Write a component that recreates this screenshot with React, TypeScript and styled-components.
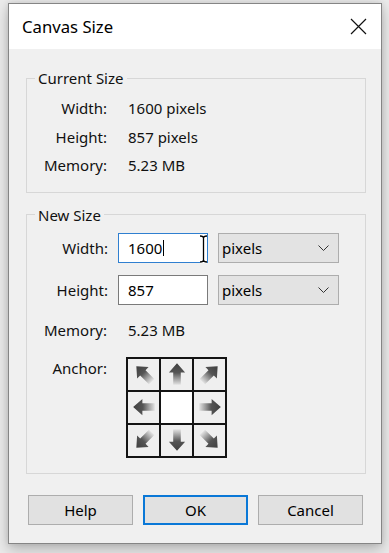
import React from "react";
import styled, { createGlobalStyle } from "styled-components";

const Global = createGlobalStyle`
  html, body { margin: 0; padding: 0; background: #ebebeb; }
  body { font-family: "Noto Sans", "Open Sans", sans-serif; color: #111; }
  * { box-sizing: border-box; }
`;

const Page = styled.div`
  width: 389px;
  height: 553px;
  padding: 3px 8px 0 8px;
  background: #ebebeb;
`;

const Window = styled.div`
  width: 374px;
  height: 541px;
  border: 1px solid #858585;
  background: #f0f0f0;
  box-shadow: 0 6px 14px rgba(0, 0, 0, 0.22), 0 0 6px rgba(0, 0, 0, 0.12);
  display: flex;
  flex-direction: column;
`;

const TitleBar = styled.div`
  height: 45px;
  background: #ffffff;
  display: flex;
  align-items: center;
  justify-content: space-between;
  padding-left: 13px;
`;

const Title = styled.div`
  font-size: 16.7px;
  color: #000;
`;

const CloseButton = styled.button`
  width: 46px;
  height: 45px;
  border: 0;
  padding: 0;
  background: transparent;
  display: flex;
  align-items: center;
  justify-content: center;
`;

const Client = styled.div`
  flex: 1;
  padding: 19px 15px 0 17px;
  display: flex;
  flex-direction: column;
`;

const Group = styled.fieldset<{ $pt: number; $pb: number; $mb?: number }>`
  margin: 0 0 ${(p) => p.$mb ?? 0}px 0;
  padding: ${(p) => p.$pt}px 0 ${(p) => p.$pb}px 0;
  border: 1px solid #d7d7d7;
  min-width: 0;
`;

const Legend = styled.legend`
  margin-left: 8px;
  padding: 0 3px;
  font-size: 15px;
  line-height: 20px;
`;

const InfoGrid = styled.div`
  display: grid;
  grid-template-columns: 80px auto;
  column-gap: 21px;
  grid-auto-rows: 28.5px;
  align-items: center;
  font-size: 15px;
`;

const Label = styled.span<{ $w?: number; $mt?: number }>`
  width: ${(p) => p.$w ?? 80}px;
  margin-top: ${(p) => p.$mt ?? 0}px;
  flex: none;
  text-align: right;
  font-size: 15px;
  line-height: 20px;
`;

const Value = styled.span`
  font-size: 15px;
  line-height: 20px;
`;

const FieldRow = styled.div<{ $gap: number; $mt?: number; $align?: string }>`
  display: flex;
  align-items: ${(p) => p.$align ?? "center"};
  gap: ${(p) => p.$gap}px;
  margin-top: ${(p) => p.$mt ?? 0}px;
`;

const TextBox = styled.div<{ $active?: boolean }>`
  position: relative;
  width: 90px;
  height: 30px;
  background: #fff;
  border: 1px solid ${(p) => (p.$active ? "#2f7fd0" : "#7a7a7a")};
  padding-left: 9px;
  display: flex;
  align-items: center;
  font-size: 15px;
  color: #000;
`;

const Caret = styled.span`
  display: inline-block;
  width: 1px;
  height: 16px;
  background: #000;
  margin-left: 1px;
`;

const IBeam = styled.svg`
  position: absolute;
  left: 80px;
  top: 0px;
`;

const Select = styled.div`
  width: 121px;
  height: 30px;
  background: #e3e3e3;
  border: 1px solid #adadad;
  padding: 0 9px 0 3px;
  display: flex;
  align-items: center;
  justify-content: space-between;
  font-size: 15px;
  color: #000;
`;

const AnchorGrid = styled.div`
  display: grid;
  grid-template-columns: repeat(3, 31px);
  grid-template-rows: repeat(3, 31px);
  gap: 2px;
  padding: 2px;
  background: #141414;
`;

const AnchorCell = styled.div<{ $center?: boolean }>`
  background: ${(p) => (p.$center ? "#ffffff" : "#efefef")};
  display: flex;
  align-items: center;
  justify-content: center;
`;

const ArrowSvg = styled.svg<{ $angle: number }>`
  transform: rotate(${(p) => p.$angle}deg);
`;

const ButtonRow = styled.div`
  display: flex;
  gap: 10px;
  margin: 21px 0 0 2px;
`;

const Button = styled.button<{ $default?: boolean }>`
  width: 105px;
  height: 30px;
  background: #e1e1e1;
  border: ${(p) => (p.$default ? "2px solid #0a78d7" : "1px solid #adadad")};
  font-family: "Noto Sans", "Open Sans", sans-serif;
  font-size: 15px;
  color: #000;
  padding: 0;
`;

const Arrow: React.FC<{ angle: number; id: string }> = ({ angle, id }) => (
  <ArrowSvg $angle={angle} width="26" height="26" viewBox="0 0 24 24">
    <defs>
      <linearGradient id={id} x1="0" y1="0" x2="0" y2="1">
        <stop offset="0" stopColor="#3f3f3f" />
        <stop offset="0.45" stopColor="#555" />
        <stop offset="1" stopColor="#5e5e5e" stopOpacity="0.08" />
      </linearGradient>
    </defs>
    <polygon
      points="12,2 19.5,10.5 15.5,10.5 15.5,22 8.5,22 8.5,10.5 4.5,10.5"
      fill={`url(#${id})`}
    />
  </ArrowSvg>
);

const anchors: (number | null)[] = [-45, 0, 45, -90, null, 90, -135, 180, 135];

const Chevron = () => (
  <svg width="11" height="6" viewBox="0 0 11 6">
    <path d="M0.5 0.5 L5.5 5.5 L10.5 0.5" stroke="#333" strokeWidth="1" fill="none" />
  </svg>
);

const iBeamPath =
  "M1 2 Q4.5 2 4.5 4 L4.5 26 Q4.5 28 1 28 M8 2 Q4.5 2 4.5 4 M4.5 26 Q4.5 28 8 28";

export default function App() {
  return (
    <>
      <Global />
      <Page>
        <Window>
          <TitleBar>
            <Title>Canvas Size</Title>
            <CloseButton aria-label="Close">
              <svg width="17" height="17" viewBox="0 0 17 17">
                <path d="M1 1 L16 16 M16 1 L1 16" stroke="#111" strokeWidth="1.2" />
              </svg>
            </CloseButton>
          </TitleBar>
          <Client>
            <Group $pt={6} $pb={12} $mb={12}>
              <Legend>Current Size</Legend>
              <InfoGrid>
                <Label>Width:</Label>
                <Value>1600 pixels</Value>
                <Label>Height:</Label>
                <Value>857 pixels</Value>
                <Label>Memory:</Label>
                <Value>5.23 MB</Value>
              </InfoGrid>
            </Group>
            <Group $pt={8} $pb={15}>
              <Legend>New Size</Legend>
              <FieldRow $gap={10}>
                <Label $w={81}>Width:</Label>
                <TextBox $active>
                  1600
                  <Caret />
                  <IBeam width="9" height="30" viewBox="0 0 9 30">
                    <path d={iBeamPath} stroke="#fff" strokeWidth="3" fill="none" />
                    <path d={iBeamPath} stroke="#000" strokeWidth="1.3" fill="none" />
                  </IBeam>
                </TextBox>
                <Select>
                  pixels
                  <Chevron />
                </Select>
              </FieldRow>
              <FieldRow $gap={10} $mt={12}>
                <Label $w={81}>Height:</Label>
                <TextBox>857</TextBox>
                <Select>
                  pixels
                  <Chevron />
                </Select>
              </FieldRow>
              <FieldRow $gap={21} $mt={15}>
                <Label>Memory:</Label>
                <Value>5.23 MB</Value>
              </FieldRow>
              <FieldRow $gap={19} $mt={17} $align="flex-start">
                <Label $mt={1}>Anchor:</Label>
                <AnchorGrid>
                  {anchors.map((a, i) => (
                    <AnchorCell key={i} $center={a === null}>
                      {a !== null && <Arrow angle={a} id={`arr${i}`} />}
                    </AnchorCell>
                  ))}
                </AnchorGrid>
              </FieldRow>
            </Group>
            <ButtonRow>
              <Button>Help</Button>
              <Button $default>OK</Button>
              <Button>Cancel</Button>
            </ButtonRow>
          </Client>
        </Window>
      </Page>
    </>
  );
}
